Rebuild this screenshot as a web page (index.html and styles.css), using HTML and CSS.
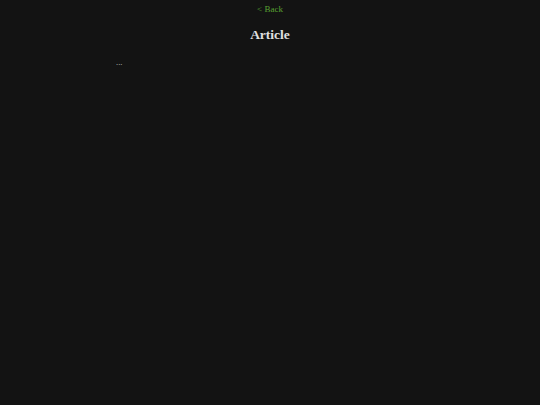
FILE: index.html
```html
<!DOCTYPE html>
<html>
<head>
	<meta charset="utf-8">
	<meta name="viewport" content="width=device-width, initial-scale=1">
	<title>Article</title>
	<link rel="stylesheet" href="styles.css">
</head>
<body>
	<nav class="top">
		<a class="back" href="#">&lt; Back</a>
	</nav>
	<h1 class="title">Article</h1>
	<div class="content">
		<p class="loading">...</p>
	</div>
</body>
</html>
```
FILE: styles.css
```css
*{
	padding: 0;
	margin: 0;
	box-sizing: border-box;
	font-family: "Liberation Serif", serif;
}
body{
	height: 100vh;
	background: #131313;
	color: #dddddd;
}
.top{
	text-align: center;
	font-size: 9px;
	line-height: 18px;
}
.back{
	color: #58a032;
	text-decoration: none;
}
.title{
	text-align: center;
	font-size: 13.5px;
	font-weight: bold;
	color: #e0e0e0;
	margin-top: 9px;
}
.content{
	width: 308px;
	margin: 14px auto 0;
}
.loading{
	font-size: 8.5px;
	color: #c0c0c0;
}
```
